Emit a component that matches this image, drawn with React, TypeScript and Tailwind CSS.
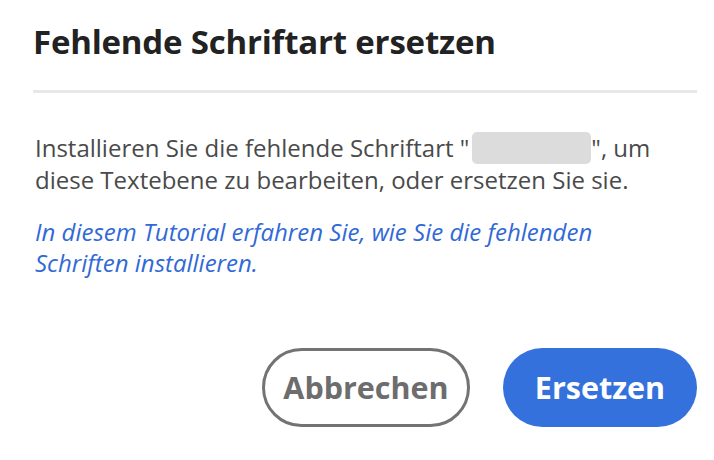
const FONT = "font-['Open_Sans','Noto_Sans',sans-serif]"

function Divider() {
  return <div className="mt-[28px] h-[3px] w-full bg-[#e8e8e8]" />
}

export default function App() {
  return (
    <div className={`${FONT} w-[714px] h-[460px] bg-white pl-[33px] pr-[17px] pt-[22px] overflow-hidden`}>
      <h1 className="text-[33px] leading-[40px] font-bold text-[#222222] tracking-[-0.2px]">
        Fehlende Schriftart ersetzen
      </h1>
      <Divider />

      <p className="mt-[39px] pl-[2px] text-[24px] leading-[32px] text-[#4a4a4a]">
        Installieren Sie die fehlende Schriftart "
        <span className="inline-block align-top ml-[3px] w-[119px] h-[32px] rounded-[5px] bg-[#dcdcdc]" />
        ", um diese Textebene zu bearbeiten, oder ersetzen Sie sie.
      </p>

      <p className="mt-[20px] pl-[2px] text-[24px] leading-[31px] italic text-[#3169d6]">
        In diesem Tutorial erfahren Sie, wie Sie die fehlenden
        <br />
        Schriften installieren.
      </p>

      <div className="mt-[70px] flex justify-end gap-[33px]">
        <button className="w-[208px] h-[79px] rounded-full border-[3px] border-[#737373] text-[30.5px] font-bold text-[#6d6d6d]">
          Abbrechen
        </button>
        <button className="w-[194px] h-[79px] rounded-full bg-[#3571dc] text-[30.5px] font-bold text-white">
          Ersetzen
        </button>
      </div>
    </div>
  )
}
